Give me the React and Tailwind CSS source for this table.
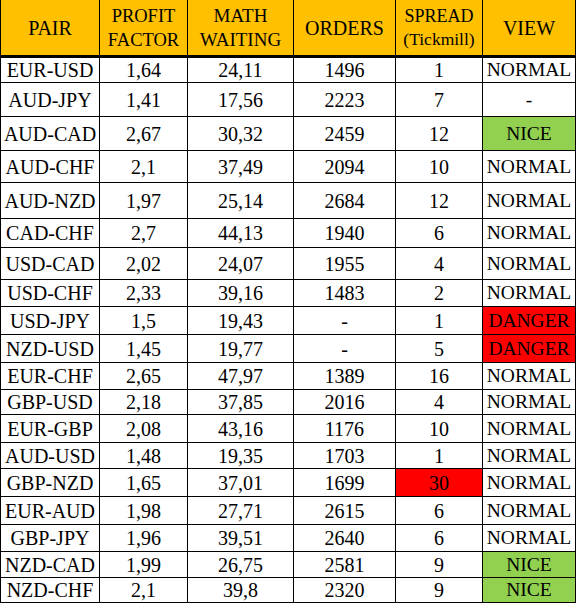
import React from 'react';

const rows = [
  { pair: 'EUR-USD', pf: '1,64', mw: '24,11', orders: '1496', spread: '1', view: 'NORMAL', h: 'h-[25px]' },
  { pair: 'AUD-JPY', pf: '1,41', mw: '17,56', orders: '2223', spread: '7', view: '-', h: 'h-[34px]' },
  { pair: 'AUD-CAD', pf: '2,67', mw: '30,32', orders: '2459', spread: '12', view: 'NICE', h: 'h-[34px]' },
  { pair: 'AUD-CHF', pf: '2,1', mw: '37,49', orders: '2094', spread: '10', view: 'NORMAL', h: 'h-[32px]' },
  { pair: 'AUD-NZD', pf: '1,97', mw: '25,14', orders: '2684', spread: '12', view: 'NORMAL', h: 'h-[36px]' },
  { pair: 'CAD-CHF', pf: '2,7', mw: '44,13', orders: '1940', spread: '6', view: 'NORMAL', h: 'h-[29px]' },
  { pair: 'USD-CAD', pf: '2,02', mw: '24,07', orders: '1955', spread: '4', view: 'NORMAL', h: 'h-[32px]' },
  { pair: 'USD-CHF', pf: '2,33', mw: '39,16', orders: '1483', spread: '2', view: 'NORMAL', h: 'h-[27px]' },
  { pair: 'USD-JPY', pf: '1,5', mw: '19,43', orders: '-', spread: '1', view: 'DANGER', h: 'h-[28px]' },
  { pair: 'NZD-USD', pf: '1,45', mw: '19,77', orders: '-', spread: '5', view: 'DANGER', h: 'h-[28px]' },
  { pair: 'EUR-CHF', pf: '2,65', mw: '47,97', orders: '1389', spread: '16', view: 'NORMAL', h: 'h-[27px]' },
  { pair: 'GBP-USD', pf: '2,18', mw: '37,85', orders: '2016', spread: '4', view: 'NORMAL', h: 'h-[25px]' },
  { pair: 'EUR-GBP', pf: '2,08', mw: '43,16', orders: '1176', spread: '10', view: 'NORMAL', h: 'h-[28px]' },
  { pair: 'AUD-USD', pf: '1,48', mw: '19,35', orders: '1703', spread: '1', view: 'NORMAL', h: 'h-[26px]' },
  { pair: 'GBP-NZD', pf: '1,65', mw: '37,01', orders: '1699', spread: '30', view: 'NORMAL', h: 'h-[28px]', hot: true },
  { pair: 'EUR-AUD', pf: '1,98', mw: '27,71', orders: '2615', spread: '6', view: 'NORMAL', h: 'h-[28px]' },
  { pair: 'GBP-JPY', pf: '1,96', mw: '39,51', orders: '2640', spread: '6', view: 'NORMAL', h: 'h-[27px]' },
  { pair: 'NZD-CAD', pf: '1,99', mw: '26,75', orders: '2581', spread: '9', view: 'NICE', h: 'h-[26px]' },
  { pair: 'NZD-CHF', pf: '2,1', mw: '39,8', orders: '2320', spread: '9', view: 'NICE', h: 'h-[25px]' },
];

const cell = "flex items-center justify-center border-r border-black font-['Times_New_Roman','DejaVu_Serif',serif]";

function viewBg(view) {
  if (view === 'NICE') return 'bg-[#92d050]';
  if (view === 'DANGER') return 'bg-[#ff0000]';
  return '';
}

export default function App() {
  return (
    <div className="w-[576px] h-[607px] bg-white text-black font-serif">
      <div className="w-[576px] border-l border-black">
        {/* header */}
        <div className="flex h-[58px] border-b-[3px] border-black bg-[#ffc000] text-[20px] leading-[24px]">
          <div className={`${cell} w-[99px]`}>PAIR</div>
          <div className={`${cell} w-[88px] flex-col text-[18.5px]`}>
            <span>PROFIT</span>
            <span>FACTOR</span>
          </div>
          <div className={`${cell} w-[106px] flex-col text-[19px]`}>
            <span>MATH</span>
            <span>WAITING</span>
          </div>
          <div className={`${cell} w-[102px]`}>ORDERS</div>
          <div className={`${cell} w-[87px] flex-col leading-[23px]`}>
            <span className="text-[18px]">SPREAD</span>
            <span className="text-[17.5px]">(Tickmill)</span>
          </div>
          <div className={`${cell} w-[93px]`}>VIEW</div>
        </div>

        {rows.map((r) => (
          <div key={r.pair} className={`flex ${r.h} border-b border-black text-[20px] leading-none`}>
            <div className={`${cell} w-[99px]`}>{r.pair}</div>
            <div className={`${cell} w-[88px]`}>{r.pf}</div>
            <div className={`${cell} w-[106px]`}>{r.mw}</div>
            <div className={`${cell} w-[102px]`}>{r.orders}</div>
            <div className={`${cell} w-[87px] ${r.hot ? 'bg-[#ff0000]' : ''}`}>{r.spread}</div>
            <div className={`${cell} w-[93px] text-[19.5px] ${viewBg(r.view)}`}>{r.view}</div>
          </div>
        ))}
      </div>
    </div>
  );
}
